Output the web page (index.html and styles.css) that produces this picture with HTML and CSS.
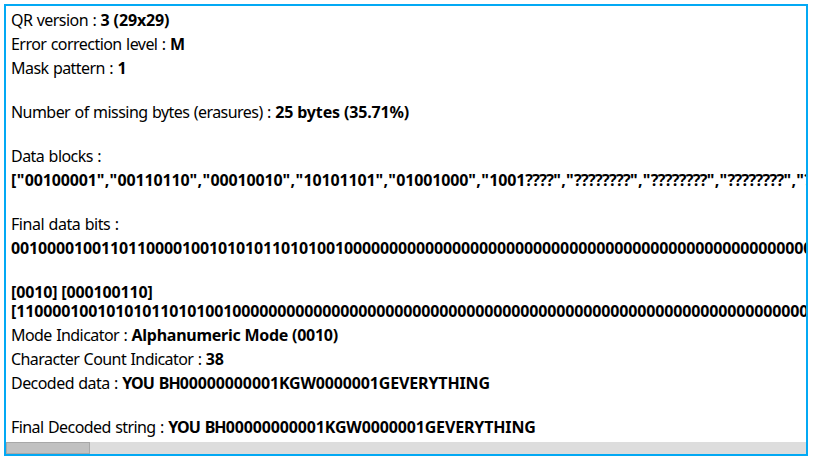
FILE: index.html
```
<!DOCTYPE html>
<html lang="en">
<head>
<meta charset="utf-8">
<title>QR decoder</title>
<link rel="stylesheet" href="styles.css">
</head>
<body>
<main class="panel">
<div class="content">
<section><p><span>QR version : </span><b>3 (29x29)</b></p><p><span>Error correction level : </span><b>M</b></p><p><span>Mask pattern : </span><b>1</b></p></section>
<section><p><span class="snug">Number of missing bytes (erasures) : </span><b>25 bytes (35.71%)</b></p></section>
<section><p><span>Data blocks :</span></p><p><b class="blocks">["<i>00100001</i>","<i>00110110</i>","<i>00010010</i>","<i>10101101</i>","<i>01001000</i>","<i>1001</i><u>????</u>","<u>????????</u>","<u>????????</u>","<u>????????</u>","<u>????????</u>"]</b></p></section>
<section><p><span class="loose">Final data bits :</span></p><p><b class="bits">0010000100110110000100101010110101001000000000000000000000000000000000000000000000000000000000000000</b></p></section>
<section><p class="segments"><b>[0010] [000100110]<br>[110000100101010110101001000000000000000000000000000000000000000000000000000000000000000000000000000</b></p><p><span class="tight">Mode Indicator : </span><b class="mode">Alphanumeric Mode (0010)</b></p><p><span class="tight">Character Count Indicator : </span><b>38</b></p><p><span>Decoded data : </span><b><em>YOU BH</em>00000000001KGW0000001GEVERYTHING</b></p></section>
<section><p><span class="tight">Final Decoded string : </span><b><em>YOU BH</em>00000000001KGW0000001GEVERYTHING</b></p></section>
</div>
<div class="scrollbar"><div class="thumb"></div></div>
</main>
</body>
</html>
```
FILE: styles.css
```
* { box-sizing: border-box; }
body { margin: 0; background: #fff; }
.panel {
  display: flex;
  flex-direction: column;
  width: 804px;
  height: 452px;
  margin: 4px;
  border: 2px solid #03a9f4;
  overflow: hidden;
  font-family: "Noto Sans", sans-serif;
  font-size: 16px;
  color: #000;
}
.content {
  flex: 1;
  display: flex;
  flex-direction: column;
  gap: 20px;
  padding: 2px 0 0 5px;
  overflow: hidden;
  white-space: pre;
}
p { margin: 0; height: 24px; line-height: 24px; }
span { letter-spacing: -0.55px; word-spacing: 0.8px; }
.snug { letter-spacing: -0.55px; }
.tight { letter-spacing: -0.57px; }
.loose { letter-spacing: -0.47px; }
b { letter-spacing: -0.15px; }
i, u, em { font-style: normal; text-decoration: none; }
.blocks { letter-spacing: 0.33px; }
.blocks i { letter-spacing: -0.15px; }
.blocks u { letter-spacing: -0.65px; }
.mode { letter-spacing: -0.26px; }
em { letter-spacing: -0.9px; word-spacing: 1.5px; }
.segments { height: 43px; padding-top: 3px; line-height: 19px; }
.scrollbar { height: 12px; background: #ddd; }
.thumb { width: 84px; height: 12px; background: #c1c1c1; border: 1px solid #a8a8a8; }
```
